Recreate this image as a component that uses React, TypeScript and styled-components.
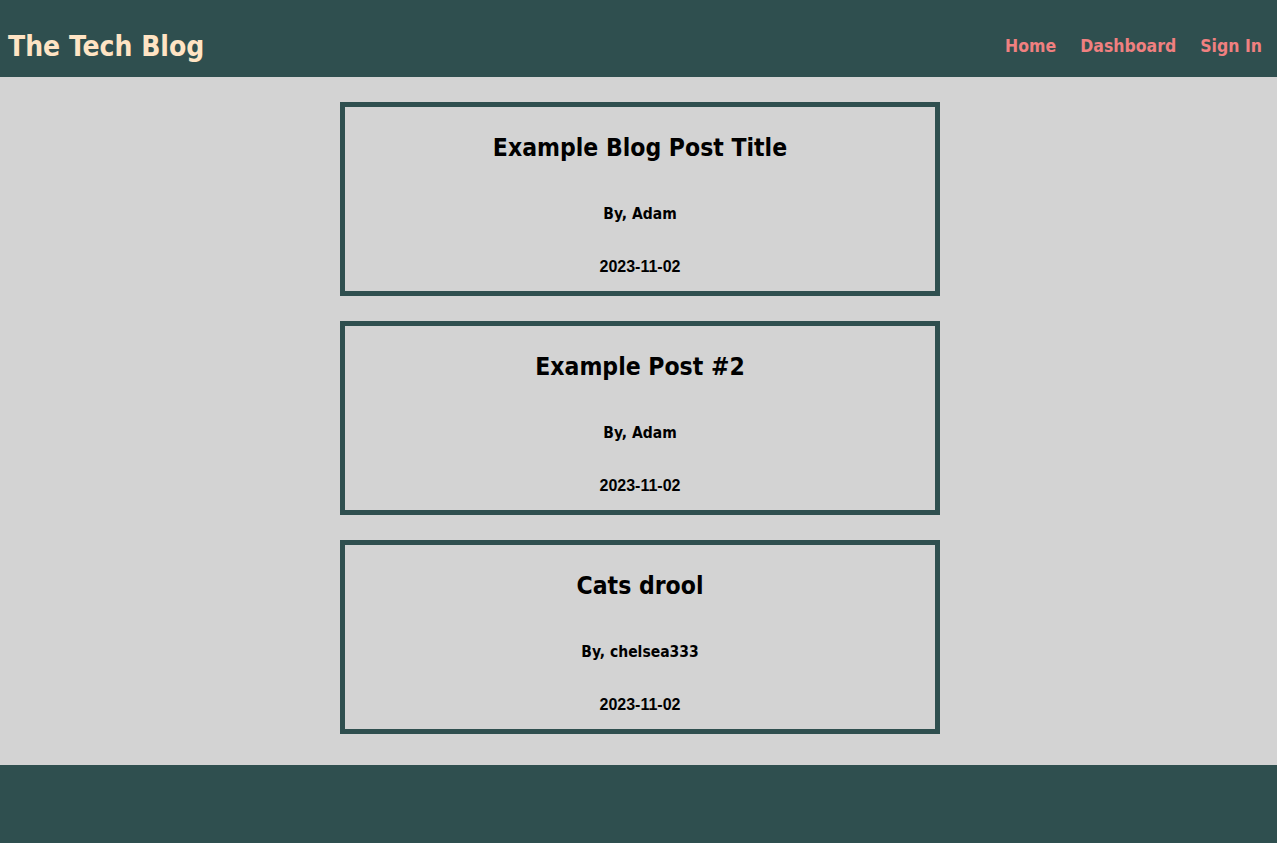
import React from "react";
import styled, { createGlobalStyle } from "styled-components";

const GlobalStyle = createGlobalStyle`
  html, body { margin: 0; padding: 0; background: #d3d3d3; }
  body { font-family: "DejaVu Sans Condensed", "Liberation Sans", sans-serif; }
`;

const Page = styled.div`
  min-height: 843px;
  display: flex;
  flex-direction: column;
  background: #d3d3d3;
`;

const Header = styled.header`
  height: 77px;
  background: #2f4f4f;
  display: flex;
  align-items: flex-end;
  justify-content: space-between;
  padding: 0 15px 16px 8px;
  box-sizing: border-box;
`;

const Brand = styled.h1`
  margin: 0;
  font-size: 28px;
  font-weight: 700;
  color: #ffe4c4;
  line-height: 1;
`;

const Nav = styled.nav`
  display: flex;
  gap: 24px;
  padding-bottom: 6px;
`;

const NavLink = styled.a`
  color: #f08080;
  font-size: 17.5px;
  font-weight: 700;
  text-decoration: none;
  line-height: 1;
`;

const Main = styled.main`
  flex: 1;
  display: flex;
  flex-direction: column;
  align-items: center;
  gap: 25px;
  padding: 25px 0 30px 3px;
`;

const Card = styled.article`
  width: 600px;
  height: 194px;
  box-sizing: border-box;
  border: 5px solid #2f4f4f;
  display: flex;
  flex-direction: column;
  align-items: center;
  padding-top: 27px;
`;

const Title = styled.h2`
  margin: 0;
  font-size: 24.5px;
  font-weight: 700;
  color: #000;
  line-height: 28px;
`;

const Author = styled.p`
  margin: 42px 0 0;
  font-size: 15.5px;
  font-weight: 700;
  color: #000;
  line-height: 20px;
`;

const Date = styled.p`
  margin: 33px 0 0;
  font-family: "Liberation Sans", Arial, sans-serif;
  font-size: 16px;
  font-weight: 700;
  color: #000;
  line-height: 20px;
`;

const Footer = styled.footer`
  height: 78px;
  background: #2f4f4f;
`;

const posts = [
  { title: "Example Blog Post Title", author: "Adam", date: "2023-11-02" },
  { title: "Example Post #2", author: "Adam", date: "2023-11-02" },
  { title: "Cats drool", author: "chelsea333", date: "2023-11-02" },
];

export default function App() {
  return (
    <>
      <GlobalStyle />
      <Page>
        <Header>
          <Brand>The Tech Blog</Brand>
          <Nav>
            <NavLink href="#">Home</NavLink>
            <NavLink href="#">Dashboard</NavLink>
            <NavLink href="#">Sign In</NavLink>
          </Nav>
        </Header>
        <Main>
          {posts.map((p, i) => (
            <Card key={i}>
              <Title>{p.title}</Title>
              <Author>By, {p.author}</Author>
              <Date>{p.date}</Date>
            </Card>
          ))}
        </Main>
        <Footer />
      </Page>
    </>
  );
}
